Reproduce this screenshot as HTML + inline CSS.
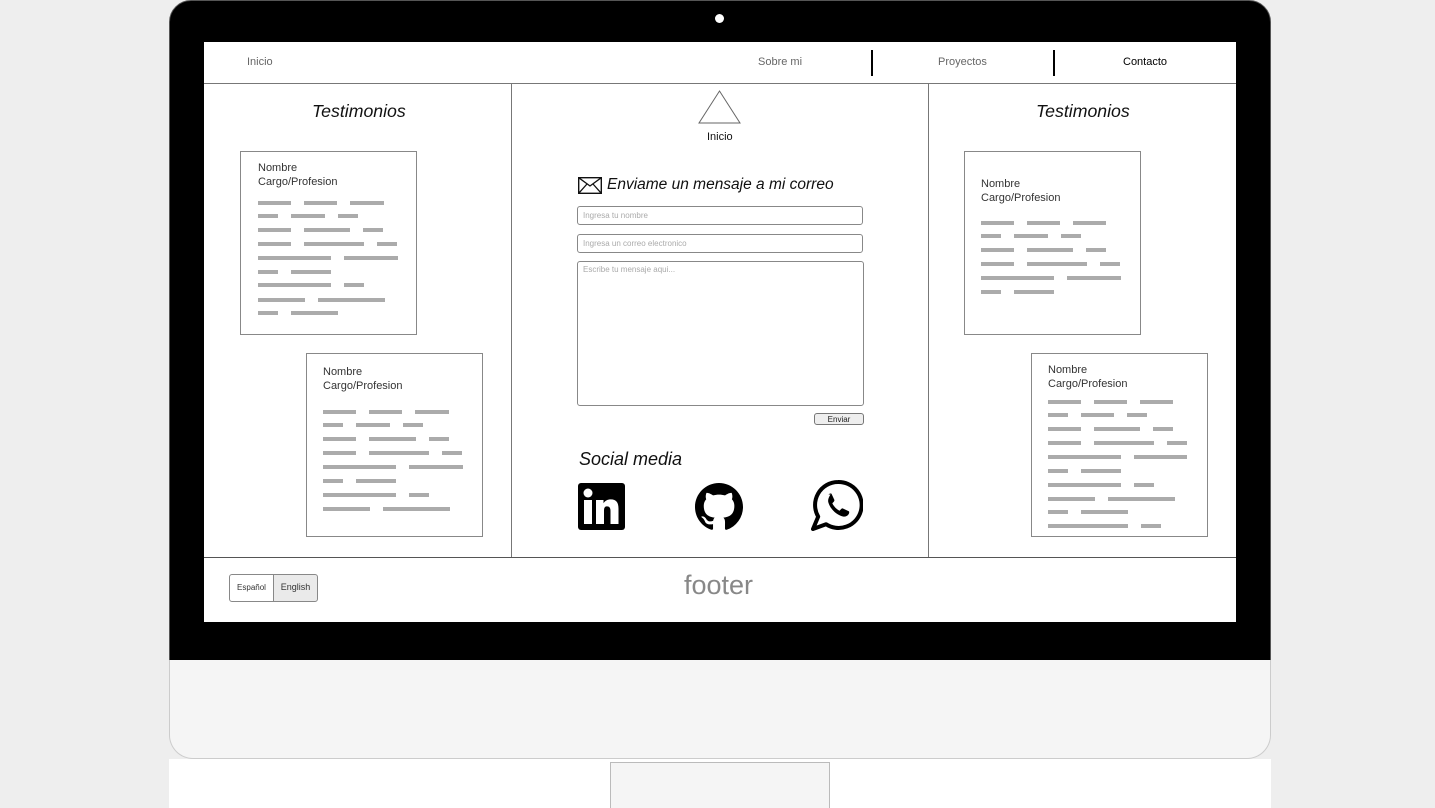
<!DOCTYPE html>
<html style="overflow:hidden"><head><meta charset="utf-8"><style>
*{margin:0;padding:0;box-sizing:border-box}
html,body{width:1435px;height:808px;overflow:hidden}
body{background:#eeeeee;position:relative;font-family:"Liberation Sans",Arial,sans-serif}
.a{position:absolute}
.frame{left:169px;top:0;width:1102px;height:661px;background:#000;border-radius:22px 22px 0 0;border:1px solid #555}
.chin{left:169px;top:660px;width:1102px;height:99px;background:#f5f5f5;border:1px solid #ccc;border-top:none;border-radius:0 0 24px 24px}
.below{left:169px;top:759px;width:1102px;height:49px;background:#fff}
.stand{left:610px;top:762px;width:220px;height:60px;background:#f5f5f5;border:1px solid #bbb}
.screen{left:204px;top:42px;width:1032px;height:580px;background:#fff}
.card{border:1px solid #888;background:#fff}
.t{font-size:11px;color:#333;line-height:14px}
.r{position:absolute;display:flex;height:4px}
.r i{display:block;height:4px;background:#ababab;margin-right:13px}
.h{font-size:18px;font-style:italic;color:#111}
.inp{border:1px solid #888;border-radius:3px;font-size:8px;color:#aaa;padding-left:5px;background:#fff}
</style></head><body>
<div class="a frame"></div>
<div class="a" style="left:715px;top:14px;width:9px;height:9px;border-radius:50%;background:#fff"></div>
<div class="a chin"></div>
<div class="a below"></div>
<div class="a stand"></div>
<div class="a screen"></div>
<!-- nav -->
<div class="a" style="left:204px;top:83px;width:1032px;height:1px;background:#777"></div>
<div class="a" style="left:247px;top:56px;font-size:11px;color:#666">Inicio</div>
<div class="a" style="left:758px;top:56px;font-size:11px;color:#666">Sobre mi</div>
<div class="a" style="left:871px;top:50px;width:2px;height:26px;background:#000"></div>
<div class="a" style="left:938px;top:56px;font-size:11px;color:#666">Proyectos</div>
<div class="a" style="left:1053px;top:50px;width:2px;height:26px;background:#000"></div>
<div class="a" style="left:1123px;top:56px;font-size:11px;color:#000">Contacto</div>
<!-- column dividers -->
<div class="a" style="left:511px;top:84px;width:1px;height:473px;background:#777"></div>
<div class="a" style="left:928px;top:84px;width:1px;height:473px;background:#777"></div>
<div class="a" style="left:204px;top:557px;width:1032px;height:1px;background:#555"></div>
<!-- left column -->
<div class="a h" style="left:312px;top:101px;font-size:17.7px">Testimonios</div>
<div class="a card" style="left:240px;top:151px;width:177px;height:184px"></div>
<div class="a t" style="left:258px;top:161px">Nombre<br>Cargo/Profesion</div>
<div class="r" style="left:258px;top:201px"><i style="width:33px"></i><i style="width:33px"></i><i style="width:34px"></i></div>
<div class="r" style="left:258px;top:214px"><i style="width:20px"></i><i style="width:34px"></i><i style="width:20px"></i></div>
<div class="r" style="left:258px;top:228px"><i style="width:33px"></i><i style="width:46px"></i><i style="width:20px"></i></div>
<div class="r" style="left:258px;top:242px"><i style="width:33px"></i><i style="width:60px"></i><i style="width:20px"></i></div>
<div class="r" style="left:258px;top:256px"><i style="width:73px"></i><i style="width:54px"></i></div>
<div class="r" style="left:258px;top:270px"><i style="width:20px"></i><i style="width:40px"></i></div>
<div class="r" style="left:258px;top:283px"><i style="width:73px"></i><i style="width:20px"></i></div>
<div class="r" style="left:258px;top:298px"><i style="width:47px"></i><i style="width:67px"></i></div>
<div class="r" style="left:258px;top:311px"><i style="width:20px"></i><i style="width:47px"></i></div>

<div class="a card" style="left:306px;top:353px;width:177px;height:184px"></div>
<div class="a t" style="left:323px;top:365px">Nombre<br>Cargo/Profesion</div>
<div class="r" style="left:323px;top:410px"><i style="width:33px"></i><i style="width:33px"></i><i style="width:34px"></i></div>
<div class="r" style="left:323px;top:423px"><i style="width:20px"></i><i style="width:34px"></i><i style="width:20px"></i></div>
<div class="r" style="left:323px;top:437px"><i style="width:33px"></i><i style="width:47px"></i><i style="width:20px"></i></div>
<div class="r" style="left:323px;top:451px"><i style="width:33px"></i><i style="width:60px"></i><i style="width:20px"></i></div>
<div class="r" style="left:323px;top:465px"><i style="width:73px"></i><i style="width:54px"></i></div>
<div class="r" style="left:323px;top:479px"><i style="width:20px"></i><i style="width:40px"></i></div>
<div class="r" style="left:323px;top:493px"><i style="width:73px"></i><i style="width:20px"></i></div>
<div class="r" style="left:323px;top:507px"><i style="width:47px"></i><i style="width:67px"></i></div>

<!-- center -->
<svg class="a" style="left:698px;top:90px" width="44" height="35"><polygon points="21.5,1 42,33 1,33" fill="#fff" stroke="#666" stroke-width="1"/></svg>
<div class="a" style="left:707px;top:131px;font-size:11px;color:#111">Inicio</div>
<svg class="a" style="left:578px;top:177px" width="24" height="17" viewBox="0 0 24 17"><rect x="0.7" y="0.7" width="22.6" height="15.6" fill="#fff" stroke="#111" stroke-width="1.4"/><path d="M0.7 0.7 L12 9 L23.3 0.7 M0.7 16.3 L9 7 M23.3 16.3 L15 7" fill="none" stroke="#111" stroke-width="1.3"/></svg>
<div class="a h" style="left:607px;top:176px;font-size:15.5px">Enviame un mensaje a mi correo</div>
<div class="a inp" style="left:577px;top:206px;width:286px;height:19px;line-height:17px">Ingresa tu nombre</div>
<div class="a inp" style="left:577px;top:234px;width:286px;height:19px;line-height:17px">Ingresa un correo electronico</div>
<div class="a inp" style="left:577px;top:261px;width:287px;height:145px;padding-top:3px">Escribe tu mensaje aqui...</div>
<div class="a" style="left:814px;top:413px;width:50px;height:12px;border:1px solid #777;border-radius:3px;background:#eee;font-size:8px;text-align:center;line-height:11px;color:#222">Enviar</div>
<div class="a h" style="left:579px;top:449px">Social media</div>
<svg class="a" style="left:578px;top:483px" width="47" height="47" viewBox="0 0 47 47"><rect width="47" height="47" rx="3" fill="#000"/><rect x="6" y="17" width="8" height="24" fill="#fff"/><circle cx="10" cy="10" r="4.5" fill="#fff"/><path d="M18 17h7.5v3.3c1.5-2.6 4.2-3.9 7.4-3.9 5.4 0 7.6 3.2 7.6 9.2V41h-8V28c0-3-1-4.6-3.5-4.6S26 25.2 26 28v13h-8z" fill="#fff"/></svg>
<svg class="a" style="left:695px;top:483px" width="48" height="48" viewBox="0 0 16 16"><path d="M8 0C3.58 0 0 3.58 0 8c0 3.540 2.290 6.530 5.470 7.590.4.07.55-.17.55-.38 0-.19-.01-.82-.01-1.49-2.01.37-2.53-.49-2.69-.94-.09-.23-.48-.94-.82-1.130-.28-.15-.68-.52-.01-.53.63-.01 1.08.58 1.23.82.72 1.21 1.87.87 2.33.66.07-.52.28-.87.51-1.07-1.78-.2-3.64-.89-3.64-3.95 0-.87.31-1.59.82-2.15-.08-.2-.36-1.02.08-2.12 0 0 .67-.21 2.2.82.64-.18 1.32-.27 2-.27.68 0 1.36.09 2 .27 1.53-1.04 2.2-.82 2.2-.82.44 1.1.16 1.92.08 2.12.51.56.82 1.27.82 2.15 0 3.07-1.87 3.75-3.65 3.95.29.25.54.73.54 1.48 0 1.07-.01 1.93-.01 2.2 0 .21.15.46.55.38A8.013 8.013 0 0016 8c0-4.42-3.58-8-8-8z" fill="#000"/></svg>
<svg class="a" style="left:811px;top:479px" width="52" height="52" viewBox="0 0 52 52"><path d="M27 3a23 23 0 0 0-19.8 34.6L2 50l13-4.8A23 23 0 1 0 27 3z" fill="none" stroke="#000" stroke-width="4" stroke-linejoin="round"/><path d="M17.5 15.5c1-1 2.2-1.2 3-.8l2.8 6c.3.7 0 1.4-.5 2l-1.5 1.6c1.4 3 4 5.8 7.2 7.4l1.7-1.7c.6-.6 1.3-.7 2-.4l5.6 2.6c.6.4.6 1.8-.3 3.2-1.2 1.8-3.4 2.6-5.6 2.1-6.6-1.6-12.8-7.8-14.600-14.3-.6-2.4.4-5 2.2-7.7z" fill="#000"/></svg>

<!-- right column -->
<div class="a h" style="left:1036px;top:101px;font-size:17.7px">Testimonios</div>
<div class="a card" style="left:964px;top:151px;width:177px;height:184px"></div>
<div class="a t" style="left:981px;top:177px">Nombre<br>Cargo/Profesion</div>
<div class="r" style="left:981px;top:221px"><i style="width:33px"></i><i style="width:33px"></i><i style="width:33px"></i></div>
<div class="r" style="left:981px;top:234px"><i style="width:20px"></i><i style="width:34px"></i><i style="width:20px"></i></div>
<div class="r" style="left:981px;top:248px"><i style="width:33px"></i><i style="width:46px"></i><i style="width:20px"></i></div>
<div class="r" style="left:981px;top:262px"><i style="width:33px"></i><i style="width:60px"></i><i style="width:20px"></i></div>
<div class="r" style="left:981px;top:276px"><i style="width:73px"></i><i style="width:54px"></i></div>
<div class="r" style="left:981px;top:290px"><i style="width:20px"></i><i style="width:40px"></i></div>

<div class="a card" style="left:1031px;top:353px;width:177px;height:184px"></div>
<div class="a t" style="left:1048px;top:363px">Nombre<br>Cargo/Profesion</div>
<div class="r" style="left:1048px;top:400px"><i style="width:33px"></i><i style="width:33px"></i><i style="width:33px"></i></div>
<div class="r" style="left:1048px;top:413px"><i style="width:20px"></i><i style="width:33px"></i><i style="width:20px"></i></div>
<div class="r" style="left:1048px;top:427px"><i style="width:33px"></i><i style="width:46px"></i><i style="width:20px"></i></div>
<div class="r" style="left:1048px;top:441px"><i style="width:33px"></i><i style="width:60px"></i><i style="width:20px"></i></div>
<div class="r" style="left:1048px;top:455px"><i style="width:73px"></i><i style="width:53px"></i></div>
<div class="r" style="left:1048px;top:469px"><i style="width:20px"></i><i style="width:40px"></i></div>
<div class="r" style="left:1048px;top:483px"><i style="width:73px"></i><i style="width:20px"></i></div>
<div class="r" style="left:1048px;top:497px"><i style="width:47px"></i><i style="width:67px"></i></div>
<div class="r" style="left:1048px;top:510px"><i style="width:20px"></i><i style="width:47px"></i></div>
<div class="r" style="left:1048px;top:524px"><i style="width:80px"></i><i style="width:20px"></i></div>

<!-- footer -->
<div class="a" style="left:229px;top:574px;width:45px;height:28px;border:1px solid #888;border-radius:3px 0 0 3px;background:#fff;font-size:8px;color:#333;text-align:center;line-height:26px">Español</div>
<div class="a" style="left:273px;top:574px;width:45px;height:28px;border:1px solid #888;border-radius:0 3px 3px 0;background:#eaeaea;font-size:9px;color:#333;text-align:center;line-height:24px">English</div>
<div class="a" style="left:684px;top:570px;font-size:27px;color:#888">footer</div>
</body></html>
